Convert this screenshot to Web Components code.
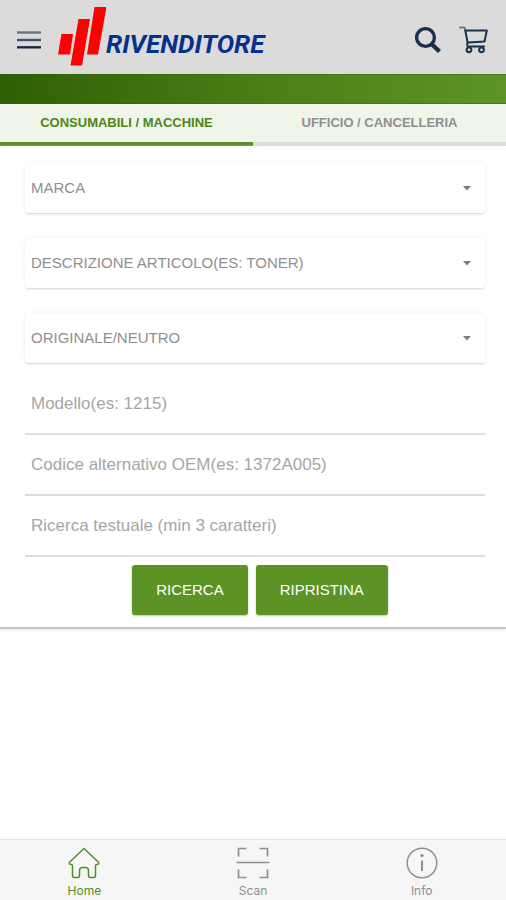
<!DOCTYPE html>
<html lang="it">
<head>
<meta charset="utf-8">
<meta name="viewport" content="width=device-width, initial-scale=1">
<title>Rivenditore</title>
<style>
  :root { --green: #5c9324; --navy: #1c2f4c; --muted: #8f8f8f; }
  html, body { height: 100%; }
  body { margin: 0; background: #fff; font-family: "Liberation Sans", Arial, sans-serif; }
</style>
</head>
<body>
<reseller-app>
  <app-header slot="header"></app-header>
  <app-tabs slot="header">
    <app-tab active>CONSUMABILI / MACCHINE</app-tab>
    <app-tab>UFFICIO / CANCELLERIA</app-tab>
  </app-tabs>
  <search-card>
    <select-field label="MARCA"></select-field>
    <select-field label="DESCRIZIONE ARTICOLO(ES: TONER)"></select-field>
    <select-field label="ORIGINALE/NEUTRO"></select-field>
    <text-field label="Modello(es: 1215)"></text-field>
    <text-field label="Codice alternativo OEM(es: 1372A005)"></text-field>
    <text-field label="Ricerca testuale (min 3 caratteri)"></text-field>
    <action-button slot="actions">RICERCA</action-button>
    <action-button slot="actions">RIPRISTINA</action-button>
  </search-card>
  <nav-bar slot="footer">
    <nav-item active>
      <svg slot="icon" width="34" height="34" viewBox="0 0 34 34" fill="none" stroke="currentColor" stroke-width="1.500" stroke-linejoin="round" stroke-linecap="round"><path d="M17 2.500 L31.500 16.200 Q32.400 18.200 30.500 18.300 Q28.500 18.300 28.500 20 V29.500 Q28.500 31.500 26.500 31.500 H23 Q21.500 31.500 21.500 30 V24.500 Q21.500 21.500 18.500 21.500 H15.500 Q12.500 21.500 12.500 24.500 V30 Q12.500 31.500 11 31.500 H7.500 Q5.500 31.500 5.500 29.500 V20 Q5.500 18.300 3.500 18.300 Q1.600 18.200 2.500 16.200 Z"/></svg>
      Home
    </nav-item>
    <nav-item>
      <svg slot="icon" width="34" height="34" viewBox="0 0 34 34" fill="none" stroke="currentColor" stroke-width="1.700"><path d="M2.500 10.500 V2.500 H10.500 M23.500 2.500 H31.500 V10.500 M2.500 23.500 V31.500 H10.500 M23.500 31.500 H31.500 V23.500 M0.500 16.500 H33.500"/></svg>
      Scan
    </nav-item>
    <nav-item>
      <svg slot="icon" width="34" height="34" viewBox="0 0 34 34" fill="none" stroke="currentColor" stroke-width="1.500"><circle cx="17" cy="17" r="14.800"/><path d="M17 14.500 V25" stroke-width="2"/><circle cx="17" cy="9.500" r="1.600" fill="currentColor" stroke="none"/></svg>
      Info
    </nav-item>
  </nav-bar>
</reseller-app>

<script>
  const define = (name, html, setup) => {
    const template = document.createElement('template');
    template.innerHTML = html;
    customElements.define(name, class extends HTMLElement {
      constructor() {
        super();
        this.attachShadow({ mode: 'open' }).append(template.content.cloneNode(true));
      }
      connectedCallback() { if (setup) setup(this, this.shadowRoot); }
    });
  };

  define('reseller-app', `
    <style>
      :host { display: flex; flex-direction: column; min-height: 100vh; }
      main { flex: 1; }
    </style>
    <slot name="header"></slot>
    <main><slot></slot></main>
    <slot name="footer"></slot>`);

  define('app-header', `
    <style>
      :host { display: block; }
      header { display: flex; align-items: center; height: 74px; padding: 0 18px 0 16px; background: #dbdbdb; }
      button { display: flex; padding: 0; border: 0; background: none; color: var(--navy); cursor: pointer; }
      .logo { display: flex; align-items: center; flex: 1; margin-left: 16px; color: #07318a; text-decoration: none; }
      .logo span { margin-top: 13px; font: italic bold 26px/32px Roboto, sans-serif; }
      .actions { display: flex; gap: 18px; margin-top: 6px; }
      .menu { margin-top: 5px; }
      .band { height: 30px; background: linear-gradient(90deg, #2f5f04, #4a7d17 50%, #5c9526); box-shadow: inset 0 1px #2f5d0866, inset 0 -1px #2f5d0866; }
    </style>
    <header>
      <button class="menu" type="button" aria-label="Menu">
        <svg width="26" height="20" viewBox="0 0 26 20" fill="none" stroke-width="2.400"><path stroke="#6b7280" d="M1 2.500 H25"/><path stroke="#44536a" d="M1 10 H25"/><path stroke="#1c2647" d="M1 17.300 H25"/></svg>
      </button>
      <a class="logo" href="#" aria-label="Rivenditore">
        <svg width="48" height="60" viewBox="0 0 48 60" fill="#fe0000"><path d="M3.500 27 H15 L12 47.500 H0 Z M20.500 12 H32 L24 58.500 H12.500 Z M36.500 0 H48.500 L40 47.500 H29 Z"/></svg>
        <span>RIVENDITORE</span>
      </a>
      <div class="actions">
        <button type="button" aria-label="Cerca">
          <svg width="26" height="28" viewBox="0 0 26 28" fill="none" stroke="currentColor"><circle cx="10.500" cy="11.500" r="8.900" stroke-width="3.400"/><path d="M16.500 18 L24.500 25.500" stroke-width="4.400"/></svg>
        </button>
        <button type="button" aria-label="Carrello">
          <svg width="29" height="28" viewBox="0 0 29 28" fill="none" stroke="currentColor" stroke-width="2" stroke-linejoin="round" stroke-linecap="round"><path d="M6 3 L8.500 16 Q7.500 20 9.500 20.500 H25 M6.400 4.500 H27.800 L25.500 15.500 L9 16.500"/><path stroke="#777" d="M1 1.500 H5.500 L6 3"/><circle cx="10" cy="23.800" r="2.400"/><circle cx="22.500" cy="23.800" r="2.400"/></svg>
        </button>
      </div>
    </header>
    <div class="band"></div>`);

  define('app-tabs', `
    <style>
      :host { display: block; }
      nav { display: flex; background: #f0f5ea; }
    </style>
    <nav><slot></slot></nav>`);

  define('app-tab', `
    <style>
      :host { display: block; flex: 1; color: var(--muted); --line: #dcdcdc; }
      :host([active]) { color: #4c8518; --line: #549024; }
      button { width: 100%; height: 42px; padding: 0; border: 0; border-bottom: 4px solid var(--line); background: none; color: inherit; font: bold 13px/16px "Liberation Sans", Arial, sans-serif; cursor: pointer; }
    </style>
    <button type="button"><slot></slot></button>`);

  define('search-card', `
    <style>
      :host { display: block; }
      form { padding: 17px 21px 12px 25px; border-bottom: 2px solid #c3c3c3; box-shadow: 0 1px 3px #e4e4e4; }
      .actions { display: flex; justify-content: center; gap: 8px; margin-top: 8px; padding-left: 10px; }
    </style>
    <form>
      <slot></slot>
      <div class="actions"><slot name="actions"></slot></div>
    </form>`);

  define('select-field', `
    <style>
      :host { display: grid; align-items: center; margin-bottom: 25px; background: #fff; border-radius: 4px; box-shadow: 0 2px 2px -1px #d4d4d4, 0 0 4px #f0f0f0; }
      :host(:nth-of-type(3)) { margin-bottom: 11px; }
      select, svg { grid-area: 1 / 1; }
      select { width: 100%; height: 50px; padding: 0 32px 0 6px; border: 0; background: none; appearance: none; color: var(--muted); font: 15px/20px "Liberation Sans", Arial, sans-serif; }
      svg { justify-self: end; margin-right: 14px; pointer-events: none; }
    </style>
    <select><option></option></select>
    <svg width="8" height="5" viewBox="0 0 8 5"><path d="M0 0 H8 L4 4.500 Z" fill="#7c7c7c"/></svg>`,
    (host, root) => {
      const label = host.getAttribute('label');
      root.querySelector('select').setAttribute('aria-label', label);
      root.querySelector('option').textContent = label;
    });

  define('text-field', `
    <style>
      :host { display: block; }
      input { display: block; box-sizing: border-box; width: 100%; height: 61px; padding: 0 6px; border: 0; border-bottom: 2px solid #dedede; background: none; color: #444; font: 17px/20px "Liberation Sans", Arial, sans-serif; outline: none; }
      input::placeholder { color: #a6a6a6; opacity: 1; }
    </style>
    <input type="text">`,
    (host, root) => {
      const input = root.querySelector('input');
      input.placeholder = host.getAttribute('label');
      input.setAttribute('aria-label', host.getAttribute('label'));
    });

  define('action-button', `
    <style>
      :host { display: block; }
      button { height: 50px; padding: 0 24px; border: 0; border-radius: 3px; background: var(--green); box-shadow: 0 1px 2px #b5c9a2; color: #fff; font: 15px/20px "Liberation Sans", Arial, sans-serif; cursor: pointer; }
    </style>
    <button type="button"><slot></slot></button>`);

  define('nav-bar', `
    <style>
      :host { display: block; }
      nav { display: flex; box-sizing: border-box; height: 61px; border-top: 1px solid #e6e6e6; background: #f6f6f6; }
    </style>
    <nav><slot></slot></nav>`);

  define('nav-item', `
    <style>
      :host { display: block; flex: 1; color: var(--muted); }
      :host([active]) { color: #4f9030; }
      a { display: flex; flex-direction: column; align-items: center; gap: 4px; padding-top: 6px; color: inherit; text-decoration: none; font: 12px/14px Inter, sans-serif; }
    </style>
    <a href="#"><slot name="icon"></slot><span><slot></slot></span></a>`);
</script>
</body>
</html>
